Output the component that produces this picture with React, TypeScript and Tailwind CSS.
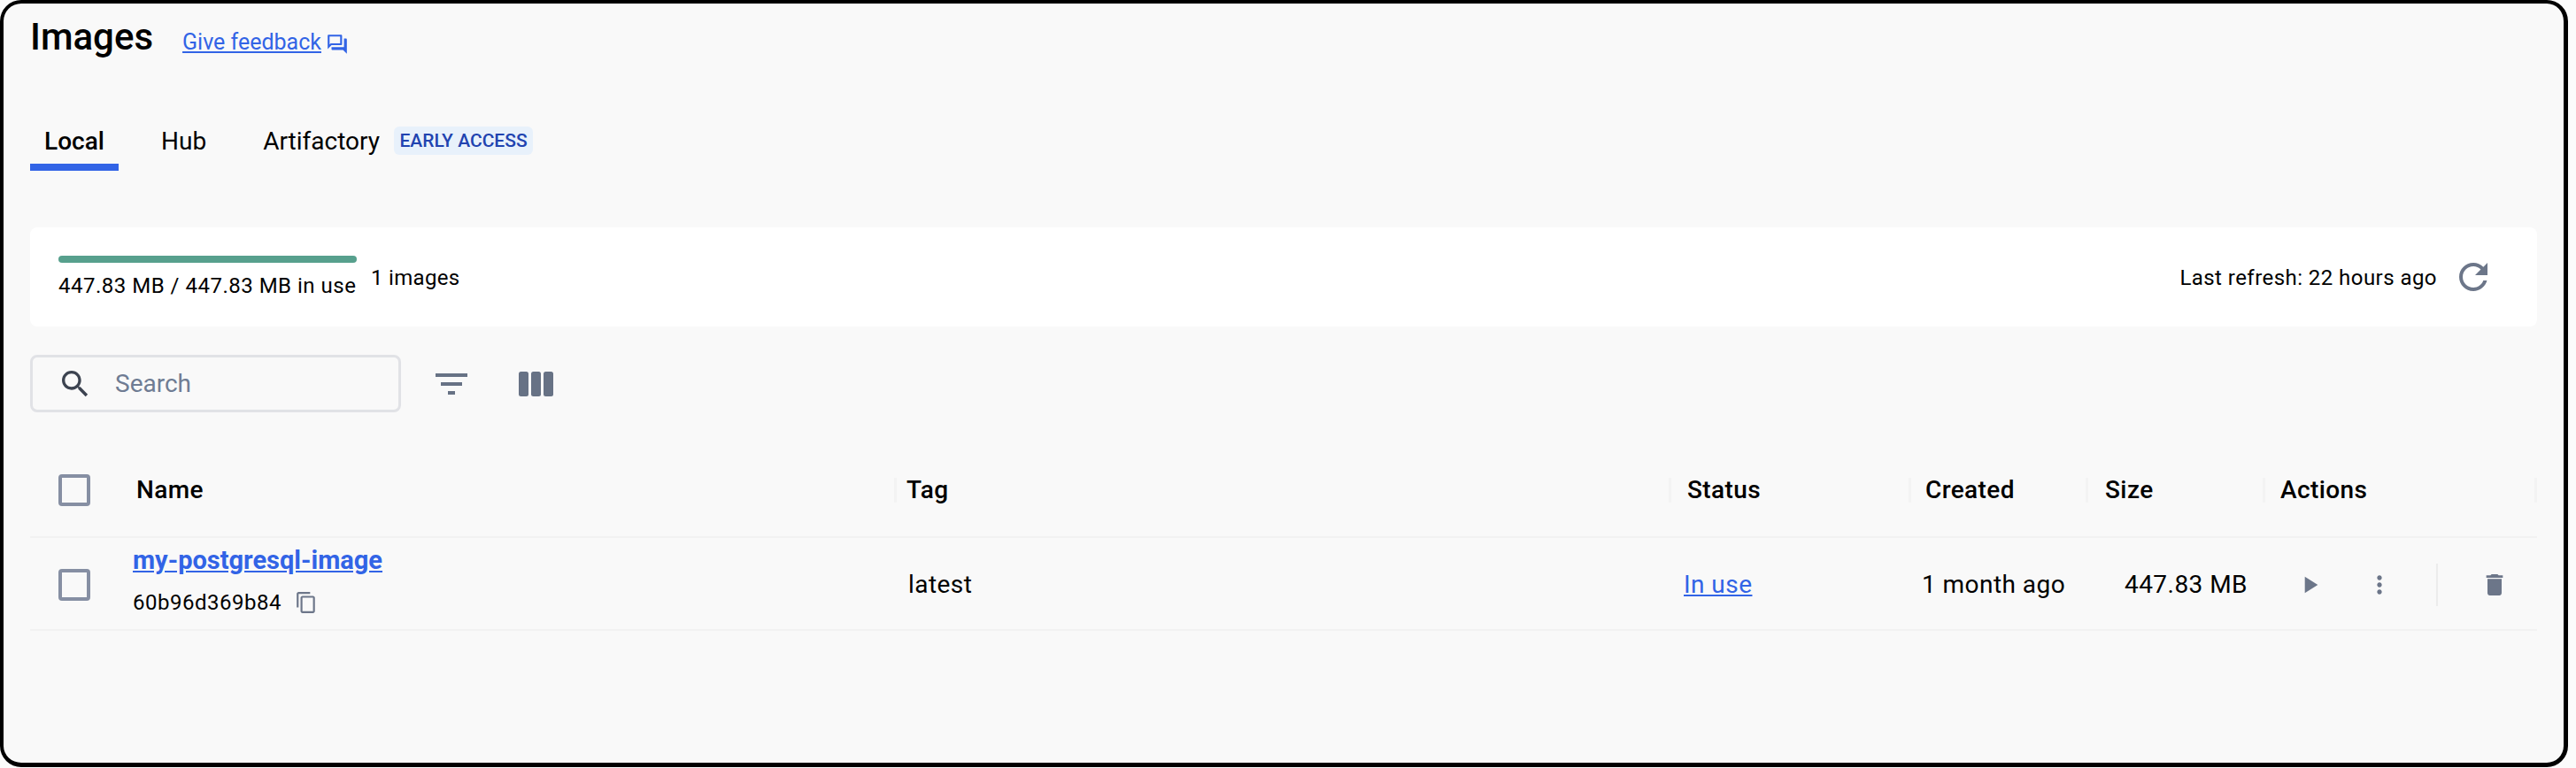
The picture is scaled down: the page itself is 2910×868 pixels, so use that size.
import React from "react";

const Ico = ({ d, className }: { d: string; className: string }) => (
  <svg viewBox="0 0 24 24" fill="currentColor" className={className}>
    <path d={d} />
  </svg>
);

const P = {
  search:
    "M15.5 14h-.79l-.28-.27C15.41 12.59 16 11.11 16 9.5 16 5.91 13.09 3 9.5 3S3 5.91 3 9.5 5.91 16 9.5 16c1.61 0 3.09-.59 4.23-1.57l.27.28v.79l5 4.99L20.49 19l-4.99-5zm-6 0C7.01 14 5 11.99 5 9.5S7.01 5 9.5 5 14 7.01 14 9.5 11.99 14 9.5 14z",
  filter: "M10 18h4v-2h-4v2zM3 6v2h18V6H3zm3 7h12v-2H6v2z",
  refresh:
    "M17.65 6.35C16.2 4.9 14.21 4 12 4c-4.42 0-7.99 3.58-7.99 8s3.57 8 7.99 8c3.73 0 6.84-2.55 7.73-6h-2.08c-.82 2.33-3.04 4-5.65 4-3.31 0-6-2.69-6-6s2.69-6 6-6c1.66 0 3.14.69 4.22 1.78L13 11h7V4l-2.35 2.35z",
  play: "M8 5v14l11-7z",
  more:
    "M12 8c1.1 0 2-.9 2-2s-.9-2-2-2-2 .9-2 2 .9 2 2 2zm0 2c-1.1 0-2 .9-2 2s.9 2 2 2 2-.9 2-2-.9-2-2-2zm0 6c-1.1 0-2 .9-2 2s.9 2 2 2 2-.9 2-2-.9-2-2-2z",
  trash: "M6 19c0 1.1.9 2 2 2h8c1.1 0 2-.9 2-2V7H6v12zM19 4h-3.5l-1-1h-5l-1 1H5v2h14V4z",
  copy:
    "M16 1H4c-1.1 0-2 .9-2 2v14h2V3h12V1zm3 4H8c-1.1 0-2 .9-2 2v14c0 1.1.9 2 2 2h11c1.1 0 2-.9 2-2V7c0-1.1-.9-2-2-2zm0 16H8V7h11v14z",
  forum:
    "M15 4v7H5.17L4 12.17V4h11m1-2H3c-.55 0-1 .45-1 1v14l4-4h10c.55 0 1-.45 1-1V3c0-.55-.45-1-1-1zm5 4h-2v9H6v2c0 .55.45 1 1 1h11l4 4V7c0-.55-.45-1-1-1z",
};

const Check = () => <div className="w-[36px] h-[36px] rounded-[4px] border-[4px] border-[#868fa3]" />;

const HeadCell = ({ label, pad }: { label: string; pad: string }) => (
  <div className="flex h-[28px] items-center border-l-[3px] border-[#f3f3f3]">
    <span className={`${pad} text-[28px] font-medium tracking-[0.4px]`}>{label}</span>
  </div>
);

const COLS = "grid grid-cols-[111px_865px_875px_271px_200px_200px_310px] items-center";

export default function App() {
  return (
    <div className="w-[2910px] h-[868px] bg-[#fbfbfb] text-black font-['Roboto',sans-serif] overflow-hidden">
      <div className="w-[2901px] h-[867px] border-[4px] border-b-[5px] border-r-[5px] border-black rounded-[24px] bg-[#f9f9f9] pl-[30px] pr-[22px]">
        <div className="flex items-center h-[84px] pt-[2px]">
          <h1 className="text-[42px] leading-[46px] mb-[10px] font-medium">Images</h1>
          <a className="ml-[33px] mt-[2px] text-[25px] leading-[30px] text-[#3264e6] underline">Give feedback</a>
          <Ico d={P.forum} className="w-[26px] h-[26px] ml-[5px] mt-[6px] text-[#3264e6]" />
        </div>

        <div className="flex items-start h-[169px] pt-[52px]">
          <div className="w-[100px] h-[53px] border-b-[8px] border-[#3264e6] text-center text-[28px] leading-[40px] font-medium">Local</div>
          <div className="ml-[48px] text-[28px] leading-[40px]">Hub</div>
          <div className="ml-[64px] text-[28px] leading-[40px]">Artifactory</div>
          <div className="ml-[16px] mt-[3px] h-[32px] w-[157px] rounded-[6px] bg-[#e8f1fb] text-center text-[21px] leading-[32px] font-medium text-[#2143b0]">EARLY ACCESS</div>
        </div>

        <div className="w-[2832px] h-[112px] bg-white rounded-[8px] flex items-start justify-between pl-[32px] pr-[48px]">
          <div className="flex items-start">
            <div className="w-[337px] pt-[32px]">
              <div className="h-[8px] rounded-[4px] bg-[#57a08d]" />
              <div className="mt-[10px] text-[24px] tracking-[0.5px] leading-[32px] whitespace-nowrap">447.83 MB / 447.83 MB in use</div>
            </div>
            <div className="ml-[16px] mt-[41px] text-[24px] tracking-[0.3px] leading-[32px]">1 images</div>
          </div>
          <div className="flex items-center mt-[32px]">
            <span className="relative top-[1px] text-[24px] tracking-[0.45px] leading-[32px]">Last refresh: 22 hours ago</span>
            <Ico d={P.refresh} className="w-[48px] h-[48px] ml-[17px] text-[#6c7689]" />
          </div>
        </div>

        <div className="flex items-center mt-[32px]">
          <div className="w-[419px] h-[65px] border-[3px] border-[#e1e2e6] rounded-[8px] flex items-center pl-[28px]">
            <Ico d={P.search} className="w-[40px] h-[40px] text-[#3c4350]" />
            <span className="ml-[25px] text-[28px] text-[#6f7c93]">Search</span>
          </div>
          <Ico d={P.filter} className="w-[48px] h-[48px] ml-[33px] text-[#677285]" />
          <svg viewBox="0 0 39 28" fill="#677285" className="w-[39px] h-[28px] ml-[52px]">
            <rect x="0" y="0" width="11" height="28" rx="2.5" />
            <rect x="14" y="0" width="11" height="28" rx="2.5" />
            <rect x="28" y="0" width="11" height="28" rx="2.5" />
          </svg>
        </div>

        <div className="w-[2832px] mt-[41px]">
          <div className={`${COLS} h-[101px] border-b-[2px] border-[#f2f2f2] pb-[5px]`}>
            <div className="pl-[32px]"><Check /></div>
            <div className="pl-[9px] text-[28px] font-medium tracking-[0.4px]">Name</div>
            <HeadCell label="Tag" pad="pl-[11px]" />
            <HeadCell label="Status" pad="pl-[18px]" />
            <HeadCell label="Created" pad="pl-[16px]" />
            <HeadCell label="Size" pad="pl-[19px]" />
            <div className="flex h-[28px] items-center justify-between border-l-[3px] border-r-[3px] border-[#f3f3f3]">
              <span className="pl-[17px] text-[28px] font-medium tracking-[0.4px]">Actions</span>
            </div>
          </div>
          <div className={`${COLS} h-[105px] border-b-[2px] border-[#f2f2f2] text-[28px] tracking-[0.45px] pt-[2px]`}>
            <div className="pl-[32px]"><Check /></div>
            <div className="pl-[5px]">
              <a className="block text-[29px] tracking-normal leading-[36px] font-bold text-[#3264e6] underline -mt-[9px]">my-postgresql-image</a>
              <div className="flex items-center mt-[14px] h-[32px]">
                <span className="text-[24px] tracking-[0.5px]">60b96d369b84</span>
                <Ico d={P.copy} className="w-[26px] h-[26px] ml-[15px] text-[#6c7689]" />
              </div>
            </div>
            <div className="pl-[16px]">latest</div>
            <div className="pl-[17px]"><a className="text-[#3264e6] underline">In use</a></div>
            <div className="pl-[15px] whitespace-nowrap">1 month ago</div>
            <div className="pl-[44px] whitespace-nowrap">447.83 MB</div>
            <div className="flex items-center pl-[37px]">
              <Ico d={P.play} className="w-[32px] h-[32px] text-[#6c7689]" />
              <Ico d={P.more} className="w-[32px] h-[32px] ml-[47px] text-[#6c7689]" />
              <div className="h-[48px] border-l-[2px] border-[#ececec] ml-[48px]" />
              <Ico d={P.trash} className="w-[32px] h-[32px] ml-[48px] text-[#6c7689]" />
            </div>
          </div>
        </div>
      </div>
    </div>
  );
}
